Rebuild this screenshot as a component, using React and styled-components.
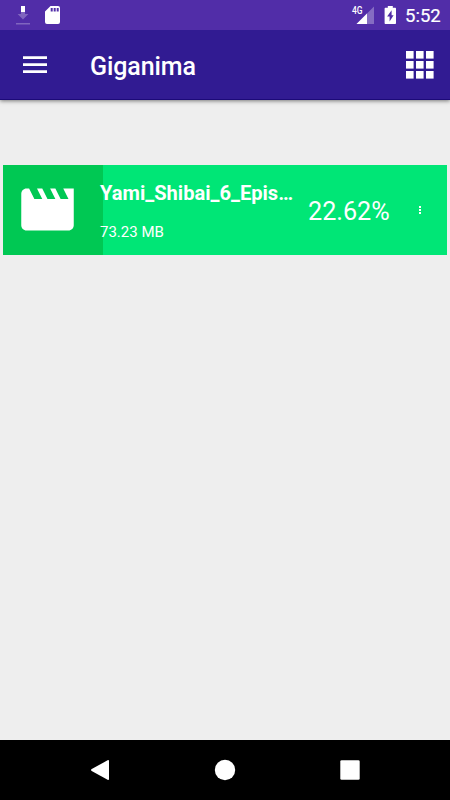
import React from 'react';
import styled, { createGlobalStyle } from 'styled-components';

const GlobalStyle = createGlobalStyle`
  * {
    margin: 0;
    padding: 0;
    box-sizing: border-box;
  }

  body {
    background: #eeeeee;
    color: #ffffff;
    font-family: Roboto, sans-serif;
  }

  svg {
    display: block;
    flex: none;
  }
`;

const Screen = styled.div`
  display: flex;
  flex-direction: column;
  height: 100vh;
  overflow: hidden;
`;

const StatusBar = styled.div`
  display: flex;
  justify-content: space-between;
  height: 30px;
  background: #512da8;
`;

const StatusGroup = styled.div`
  display: flex;
  align-items: center;
`;

const Clock = styled.span`
  width: 45px;
  padding-top: 2px;
  font-size: 18.5px;
  line-height: 30px;
  font-weight: 400;
  -webkit-text-stroke: 0.2px #ffffff;
  white-space: nowrap;
`;

const Network = styled.text`
  font-family: Roboto, sans-serif;
  font-size: 10px;
  font-weight: 500;
  fill: #ffffff;
`;

const Toolbar = styled.header`
  display: flex;
  align-items: center;
  height: 70px;
  padding: 0 16px 0 23px;
  background: #311b92;
  border-bottom: 1px solid #1c0a78;
  box-shadow: 0 1px 4px rgba(0, 0, 0, 0.5);
  clip-path: inset(0 0 -8px 0);
`;

const Title = styled.h1`
  flex: 1;
  padding-top: 4px;
  margin-left: 43px;
  font-size: 25px;
  line-height: 30px;
  font-weight: 500;
  letter-spacing: -0.1px;
`;

const IconButton = styled.button`
  border: none;
  background: none;
  color: inherit;
`;

const Content = styled.main`
  flex: 1;
  padding: 65px 3px 0;
`;

const DownloadCard = styled.div`
  display: flex;
  align-items: center;
  height: 90px;
  background: linear-gradient(
    to right,
    #00c853 ${({ $progress }) => $progress}%,
    #00e676 ${({ $progress }) => $progress}%
  );
`;

const Thumb = styled.div`
  width: 97px;
  padding: 0 0 2px 13px;
`;

const Info = styled.div`
  width: 208px;
`;

const FileName = styled.div`
  padding-top: 2px;
  font-size: 20.1px;
  line-height: 24px;
  font-weight: 700;
  white-space: nowrap;
`;

const FileSize = styled.div`
  margin-top: 18px;
  font-size: 15px;
  line-height: 18px;
`;

const Percent = styled.div`
  width: 110px;
  padding-top: 4px;
  font-size: 25.2px;
  line-height: 30px;
`;

const NavBar = styled.nav`
  display: flex;
  align-items: center;
  justify-content: space-between;
  height: 60px;
  padding: 0 90px;
  background: #000000;
`;

const DownloadIcon = () => (
  <svg width="30" height="30" fill="#fff">
    <path d="M21 6h4v6h-4z" />
    <path d="M21 12h4v2h3.4L23 19.4 17.6 14H21zM16 23h14v1.6H16z" opacity=".27" />
  </svg>
);

const SdCardIcon = () => (
  <svg width="32" height="30" fill="#fff">
    <path
      fillRule="evenodd"
      d="M20.5 6H28a2 2 0 0 1 2 2v14a2 2 0 0 1-2 2H17a2 2 0 0 1-2-2V11.5zM20.7 8v3.6h2V8zm3 0v3.6h2V8zm3 0v3.6h2V8z"
    />
  </svg>
);

const SignalIcon = () => (
  <svg width="24" height="30" fill="#fff">
    <path d="M23 6.5V24H5.5z" opacity=".3" />
    <path d="M16 13.5V24H5.5z" />
    <Network x="1" y="13.7" textLength="10.6" lengthAdjust="spacingAndGlyphs">4G</Network>
  </svg>
);

const BatteryIcon = () => (
  <svg width="30" height="30" fill="#fff">
    <path
      fillRule="evenodd"
      d="M12.8 6h5v1.8h2.2c.6 0 1 .4 1 1V23c0 .6-.4 1-1 1h-9.400c-.6 0-1-.4-1-1V8.800c0-.6.4-1 1-1h2.200zM16.600 10.200l-4.500 6.200h2.500V21.600l4-6.400h-2z"
    />
  </svg>
);

const MenuIcon = () => (
  <svg width="24" height="19" fill="#fff">
    <path d="M0 1.300h24v2.700H0zM0 8.300h24v2.700H0zM0 15.300h24v2.700H0z" />
  </svg>
);

const AppsIcon = () => (
  <svg width="28" height="28" fill="#fff">
    {[0, 10, 20].map((y) =>
      [0, 10, 20].map((x) => <rect key={`${x}-${y}`} x={x} y={y} width="7.6" height="7.6" />)
    )}
  </svg>
);

const MovieIcon = () => (
  <svg width="63" height="63" viewBox="0 0 24 24" fill="#fff">
    <path d="M18 4l2 4h-3l-2-4h-2l2 4h-3l-2-4H8l2 4H7L5 4H4c-1.100 0-1.990.9-1.990 2L2 18c0 1.100.9 2 2 2h16c1.100 0 2-.9 2-2V4h-4z" />
  </svg>
);

const MoreIcon = () => (
  <svg width="4" height="10" fill="#fff">
    <path d="M1 1h2v2H1zM1 4h2v2H1zM1 7h2v2H1z" />
  </svg>
);

const BackIcon = () => (
  <svg width="20" height="22" fill="#fff">
    <path d="M17.600 1.300c.8-.4 1.400-.1 1.400.7v18c0 .8-.6 1.100-1.400.7L1.700 11.900c-.9-.5-.9-1.300 0-1.800z" />
  </svg>
);

const HomeIcon = () => (
  <svg width="22" height="22" fill="#fff">
    <circle cx="11" cy="11" r="10.2" />
  </svg>
);

const RecentsIcon = () => (
  <svg width="20" height="20" fill="#fff">
    <rect x="0.3" y="0.3" width="19.4" height="19.4" rx="1.3" />
  </svg>
);

const downloads = [{ name: 'Yami_Shibai_6_Epis…', size: '73.23 MB', progress: 22.62 }];

const App = () => {
  return (
    <>
      <GlobalStyle />
      <Screen>
        <StatusBar>
          <StatusGroup>
            <DownloadIcon />
            <SdCardIcon />
          </StatusGroup>
          <StatusGroup>
            <SignalIcon />
            <BatteryIcon />
            <Clock>5:52</Clock>
          </StatusGroup>
        </StatusBar>

        <Toolbar>
          <IconButton aria-label="Menu">
            <MenuIcon />
          </IconButton>
          <Title>Giganima</Title>
          <IconButton aria-label="Apps">
            <AppsIcon />
          </IconButton>
        </Toolbar>

        <Content>
          {downloads.map((item) => (
            <DownloadCard key={item.name} $progress={item.progress}>
              <Thumb>
                <MovieIcon />
              </Thumb>
              <Info>
                <FileName>{item.name}</FileName>
                <FileSize>{item.size}</FileSize>
              </Info>
              <Percent>{item.progress}%</Percent>
              <IconButton aria-label="More">
                <MoreIcon />
              </IconButton>
            </DownloadCard>
          ))}
        </Content>

        <NavBar>
          <BackIcon />
          <HomeIcon />
          <RecentsIcon />
        </NavBar>
      </Screen>
    </>
  );
};

export default App;
